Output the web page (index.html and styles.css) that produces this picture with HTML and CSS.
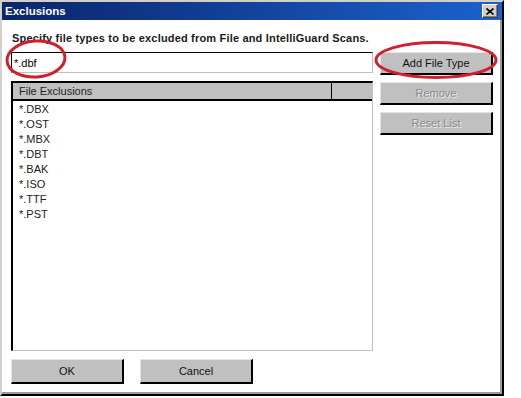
FILE: index.html
```html
<!DOCTYPE html>
<html lang="en">
<head>
    <meta charset="UTF-8">
    <title>Exclusions</title>
    <link rel="stylesheet" href="styles.css">
</head>
<body>
    <div class="window">
        <div class="titlebar">
            <span class="title">Exclusions</span>
            <button class="closeBtn" type="button">
                <svg width="8" height="7" viewBox="0 0 8 7"><path d="M0.5 0.5 L7.5 6.5 M7.5 0.5 L0.5 6.5" stroke="#000" stroke-width="1.6"/></svg>
            </button>
        </div>
        <div class="content">
            <p class="prompt">Specify file types to be excluded from File and IntelliGuard Scans.</p>
            <div class="main">
                <div class="leftCol">
                    <div class="textbox">*.dbf</div>
                    <div class="list">
                        <div class="listHeader">
                            <div class="colName">File Exclusions</div>
                            <div class="colExtra"></div>
                        </div>
                        <div class="listItems">
                            <div class="item">*.DBX</div>
                            <div class="item">*.OST</div>
                            <div class="item">*.MBX</div>
                            <div class="item">*.DBT</div>
                            <div class="item">*.BAK</div>
                            <div class="item">*.ISO</div>
                            <div class="item">*.TTF</div>
                            <div class="item">*.PST</div>
                        </div>
                    </div>
                </div>
                <div class="rightCol">
                    <button class="btn" type="button">Add File Type</button>
                    <button class="btn disabled" type="button">Remove</button>
                    <button class="btn disabled" type="button">Reset List</button>
                </div>
            </div>
            <div class="footer">
                <button class="btn footBtn" type="button">OK</button>
                <button class="btn footBtn" type="button">Cancel</button>
            </div>
        </div>

        <!-- red marks drawn over the dialog -->
        <svg class="marks" width="505" height="396" viewBox="0 0 505 396">
            <ellipse cx="36" cy="59" rx="29" ry="18" transform="rotate(-4 36 59)"/>
            <ellipse cx="436" cy="60" rx="60" ry="17.5"/>
        </svg>
    </div>
</body>
</html>
```

FILE: styles.css
```css
body {
    margin: 0;
    padding: 0;
    background-color: #fff;
    font-family: "Liberation Sans", Arial, sans-serif;
    font-size: 11px;
    color: #000;
}

.window {
    position: relative;
    width: 500px;
    height: 392px;
    border-top: 2px solid #d4d0c8;
    border-left: 2px solid #d4d0c8;
    border-right: 2px solid #000;
    border-bottom: 2px solid #000;
    box-shadow: inset -2px -2px 0 #9a9a9a, inset 1px 1px 0 #fff;
    background-color: #fff;
}

.titlebar {
    display: flex;
    align-items: center;
    justify-content: space-between;
    height: 18px;
    padding: 0 4px 0 3px;
    background: linear-gradient(to right, #0a246a, #1c62d0);
}

.title {
    color: #fff;
    font-weight: bold;
    font-size: 11.5px;
}

.closeBtn {
    display: flex;
    align-items: center;
    justify-content: center;
    width: 16px;
    height: 14px;
    padding: 0;
    background-color: #d4d0c8;
    border: 1px solid;
    border-color: #fff #404040 #404040 #fff;
    box-shadow: inset -1px -1px 0 #808080;
}

.content {
    padding: 0 9px;
}

.prompt {
    margin: 0;
    padding: 12px 0 0 1px;
    height: 20px;
    font-weight: bold;
    font-size: 11px;
    letter-spacing: 0.18px;
    color: #1a1a1a;
}

.main {
    display: flex;
    gap: 7px;
}

.leftCol {
    display: flex;
    flex-direction: column;
    gap: 8px;
    width: 362px;
}

.textbox {
    height: 17px;
    padding: 2px 0 0 2px;
    border-top: 1px solid #000;
    border-left: 1px solid #000;
    border-right: 1px solid #c0c0c0;
    border-bottom: 1px solid #c0c0c0;
    line-height: 17px;
    background-color: #fff;
}

.list {
    height: 267px;
    border-top: 2px solid #000;
    border-left: 2px solid #000;
    border-right: 1px solid #c0c0c0;
    border-bottom: 1px solid #c0c0c0;
    background-color: #fff;
}

.listHeader {
    display: flex;
    height: 16px;
    border-bottom: 2px solid #000;
    background-color: #c0c0c0;
}

.colName {
    width: 312px;
    padding-left: 6px;
    line-height: 16px;
    border-right: 1px solid #000;
    color: #222;
}

.colExtra {
    flex: 1;
}

.listItems {
    padding: 1px 0 0 6px;
}

.item {
    height: 15px;
    line-height: 15px;
    color: #222;
}

.rightCol {
    display: flex;
    flex-direction: column;
    gap: 7px;
}

.btn {
    width: 113px;
    height: 23px;
    padding: 0;
    font-family: "Liberation Sans", Arial, sans-serif;
    font-size: 11px;
    color: #111;
    background-color: #c0c0c0;
    border-top: 1px solid #e4e4e4;
    border-left: 1px solid #e4e4e4;
    border-right: 2px solid #000;
    border-bottom: 2px solid #000;
}

.btn.disabled {
    color: #8a8a8a;
    text-shadow: 1px 1px 0 #ececec;
}

.footer {
    display: flex;
    gap: 16px;
    margin-top: 8px;
}

.footBtn {
    width: 113px;
    height: 25px;
}

.marks {
    position: absolute;
    top: -2px;
    left: -2px;
    pointer-events: none;
}

.marks ellipse {
    fill: none;
    stroke: #d0202c;
    stroke-width: 3;
}
```
